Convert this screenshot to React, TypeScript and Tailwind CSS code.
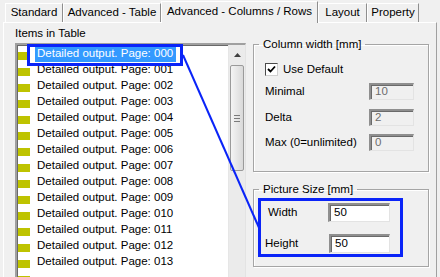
import React from "react";

const items = Array.from({ length: 14 }, (_, i) => `Detailed output. Page: ${String(i).padStart(3, "0")}`);

function Tab({ label, w }: { label: string; w: string }) {
  return (
    <div
      className={`mt-[3px] h-[19px] ${w} flex items-center justify-center border-t border-l border-white border-r border-r-[#8e8e8e]`}
    >
      {label}
    </div>
  );
}

function SunkenInput({ value, disabled, w, h }: { value: string; disabled?: boolean; w: string; h: string }) {
  return (
    <div
      className={`${w} ${h} flex items-center pl-[4px] border-t-2 border-l-2 border-t-[#8f8f8f] border-l-[#8f8f8f] border-b border-r border-b-[#e3e3e3] border-r-[#e3e3e3] shadow-[inset_1px_1px_0_#6a6a6a] ${
        disabled ? "bg-[#f0f0f0] text-[#6d6d6d]" : "bg-white text-black"
      }`}
    >
      {value}
    </div>
  );
}

export default function App() {
  return (
    <div className="relative w-[440px] h-[277px] overflow-hidden bg-[#f0f0f0] text-black text-[11.5px] leading-none [font-family:'Liberation_Sans',Arial,sans-serif]">
      {/* Tab strip */}
      <div className="relative z-10 flex h-[22px] pl-[5px]">
        <Tab label="Standard" w="w-[58px]" />
        <Tab label="Advanced - Table" w="w-[98px]" />
        <div className="mt-[1px] h-[22px] w-[157px] flex items-center justify-center pb-[2px] bg-[#f0f0f0] border-t border-l border-white border-r border-r-[#8e8e8e]">
          Advanced - Columns / Rows
        </div>
        <Tab label="Layout" w="w-[49px]" />
        <Tab label="Property" w="w-[52px]" />
      </div>

      {/* Panel */}
      <div className="mx-[3px] h-[255px] flex border-t border-l border-white border-r border-r-[#a0a0a0]">
        {/* Left column */}
        <div className="pl-[11px] flex flex-col">
          <div className="mt-[3px] h-[14px] leading-[14px]">Items in Table</div>
          <div className="mt-[3px] w-[231px] h-[240px] flex bg-white border-t-2 border-l-2 border-[#a0a0a0] border-r border-r-[#e3e3e3] shadow-[inset_1px_1px_0_#696969]">
            <div className="flex-1 flex flex-col pt-[1px]">
              {items.map((t, i) => (
                <div key={t} className="h-[16px] shrink-0 flex items-center pl-[1px]">
                  <div className="mt-[4px] w-[12px] h-[8px] bg-[#bec300] shrink-0" />
                  <div
                    className={`ml-[5px] h-[16px] flex items-center pl-[2px] pr-[3px] ${
                      i === 0 ? "bg-[#3399ff] text-white" : "text-black"
                    }`}
                  >
                    {t}
                  </div>
                </div>
              ))}
              <div className="h-[16px] shrink-0 flex items-center pl-[1px]">
                <div className="mt-[4px] w-[12px] h-[8px] bg-[#bec300] shrink-0" />
              </div>
            </div>
            {/* Scrollbar */}
            <div className="w-[17px] flex flex-col bg-[#ebebeb] border-l border-l-[#e6e6e6]">
              <div className="h-[18px] flex items-center justify-center pt-[2px]">
                <svg width="7" height="4" viewBox="0 0 7 4">
                  <polygon points="0,4 7,4 3.5,0" fill="#404040" />
                </svg>
              </div>
              <div className="mt-[2px] mx-[1px] h-[106px] rounded-[2px] border border-[#9a9a9a] bg-gradient-to-r from-[#f4f4f4] to-[#d9d9d9] flex flex-col items-center justify-center gap-[2px]">
                <div className="w-[6px] h-[1px] bg-[#7a7a7a]" />
                <div className="w-[6px] h-[1px] bg-[#7a7a7a]" />
                <div className="w-[6px] h-[1px] bg-[#7a7a7a]" />
              </div>
            </div>
          </div>
        </div>

        {/* Right column */}
        <div className="ml-[7px] flex flex-col">
          <fieldset className="mt-[14px] w-[176px] h-[135px] border border-[#a5a5a5] pl-[5px] shadow-[1px_1px_0_#ffffff,inset_1px_1px_0_#ffffff]">
            <legend className="px-[4px] h-[14px] leading-[14px]">Column width [mm]</legend>
            <div className="pl-[6px] pt-[12px] flex flex-col">
              <div className="h-[13px] flex items-center">
                <div className="w-[13px] h-[13px] bg-white border border-[#4a4a4a] border-r-[#d0d0d0] border-b-[#d0d0d0] flex items-center justify-center">
                  <svg width="9" height="9" viewBox="0 0 9 9">
                    <polyline points="1,4 3.5,6.5 8,1.5" fill="none" stroke="#000" strokeWidth="1.8" />
                  </svg>
                </div>
                <span className="ml-[5px]">Use Default</span>
              </div>
              <div className="mt-[7px] flex items-center">
                <span className="w-[104px]">Minimal</span>
                <SunkenInput value="10" disabled w="w-[45px]" h="h-[17px]" />
              </div>
              <div className="mt-[9px] flex items-center">
                <span className="w-[104px]">Delta</span>
                <SunkenInput value="2" disabled w="w-[45px]" h="h-[17px]" />
              </div>
              <div className="mt-[8px] flex items-center">
                <span className="w-[104px]">Max (0=unlimited)</span>
                <SunkenInput value="0" disabled w="w-[45px]" h="h-[17px]" />
              </div>
            </div>
          </fieldset>

          <fieldset className="mt-[10px] w-[176px] h-[85px] border border-[#a5a5a5] pl-[5px] shadow-[1px_1px_0_#ffffff,inset_1px_1px_0_#ffffff]">
            <legend className="px-[4px] h-[14px] leading-[14px]">Picture Size [mm]</legend>
            <div className="pl-[6px] pt-[7px] flex flex-col">
              <div className="flex items-center">
                <span className="ml-[3px] w-[60px]">Width</span>
                <SunkenInput value="50" w="w-[62px]" h="h-[19px]" />
              </div>
              <div className="mt-[12px] flex items-center">
                <span className="w-[64px]">Height</span>
                <SunkenInput value="50" w="w-[61px]" h="h-[19px]" />
              </div>
            </div>
          </fieldset>
        </div>
      </div>

      {/* Annotations */}
      <div className="absolute left-[27px] top-[44px] w-[156px] h-[22px] border-[3px] border-[#0a24f8] pointer-events-none" />
      <div className="absolute left-[258px] top-[198px] w-[145px] h-[59px] border-[3px] border-[#0a24f8] pointer-events-none" />
      <svg className="absolute left-0 top-0 pointer-events-none" width="440" height="277" viewBox="0 0 440 277">
        <line x1="183" y1="55" x2="260" y2="230" stroke="#0a24f8" strokeWidth="2" />
      </svg>
    </div>
  );
}
